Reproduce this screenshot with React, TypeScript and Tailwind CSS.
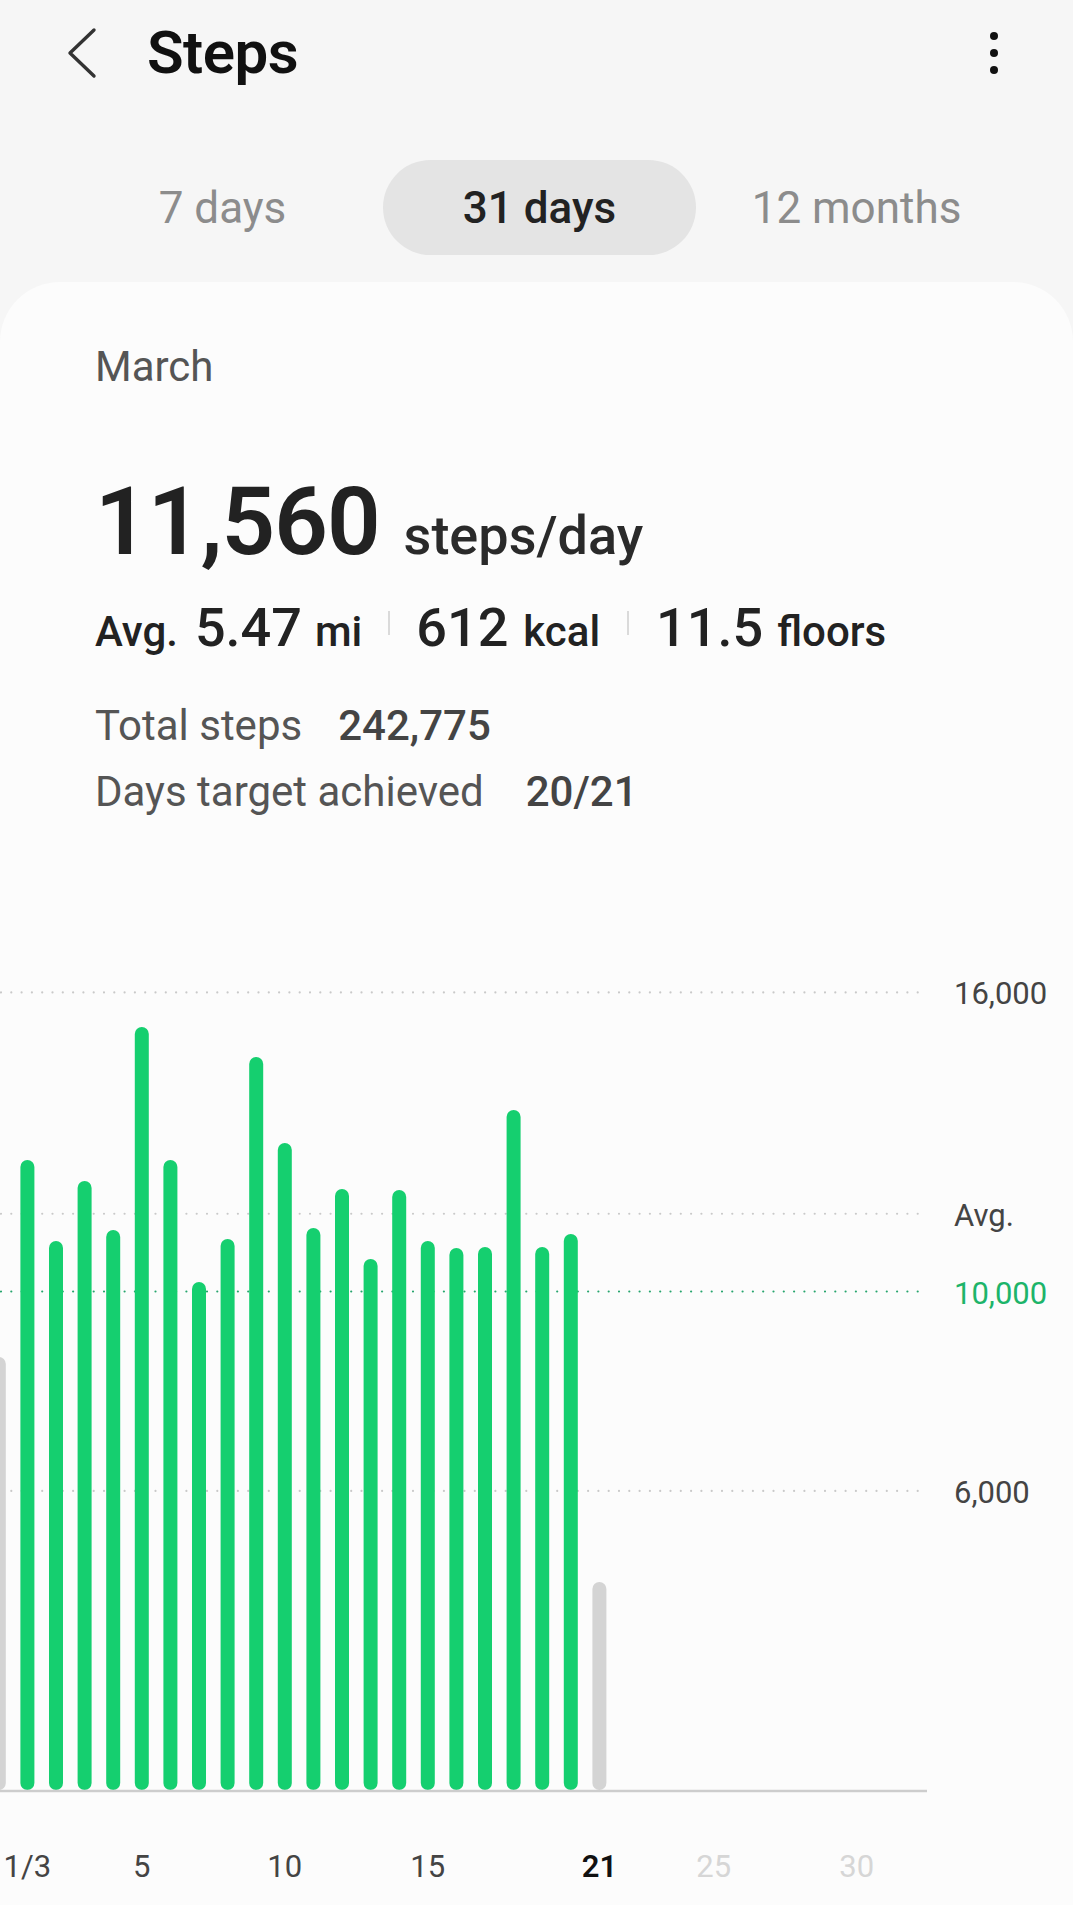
import React from 'react';

// daily step counts, index 0 is the last day of February
const days = [
  8686, 12638, 11013, 12217, 11234, 15306, 12638, 10191, 11053, 14704, 12979,
  11274, 12056, 10652, 12036, 11013, 10873, 10893, 13641, 10893, 11153, 4173,
];

const BASE = 830;
const yFor = (steps: number) => BASE - steps * 0.04985;
const xFor = (day: number) => 27.4 + (day - 1) * 28.6;

function StepsChart() {
  const grid = [
    { y: yFor(16000), label: '16,000', color: '#c9c9c9', text: '#444' },
    { y: yFor(11560), label: 'Avg.', color: '#c9c9c9', text: '#444' },
    { y: yFor(10000), label: '10,000', color: '#26a56d', text: '#1db46a' },
    { y: yFor(6000), label: '6,000', color: '#c9c9c9', text: '#444' },
  ];
  const ticks = [
    { d: 1, label: '1/3', fill: '#444', weight: 400 },
    { d: 5, label: '5', fill: '#444', weight: 400 },
    { d: 10, label: '10', fill: '#444', weight: 400 },
    { d: 15, label: '15', fill: '#444', weight: 400 },
    { d: 21, label: '21', fill: '#111', weight: 600 },
    { d: 25, label: '25', fill: '#d6d6d6', weight: 400 },
    { d: 30, label: '30', fill: '#d6d6d6', weight: 400 },
  ];

  return (
    <svg width="1073" height="945" viewBox="0 0 1073 945" className="block" style={{ fontFamily: 'Roboto, sans-serif' }}>
      {grid.map((g) => (
        <g key={g.label}>
          <line x1="1" y1={g.y} x2="924" y2={g.y} stroke={g.color} strokeWidth="2.2" strokeLinecap="round" strokeDasharray="0 10.3" />
          <text x="954" y={g.y + 12} fontSize="31" fill={g.text}>
            {g.label}
          </text>
        </g>
      ))}

      {days.map((s, d) => {
        const y = yFor(s);
        const gray = d === 0 || d === 21;
        return <rect key={d} x={xFor(d) - 7} y={y} width="14" height={BASE - y} rx="7" fill={gray ? '#d4d4d4' : '#15cf6f'} />;
      })}

      <line x1="0" y1="831" x2="927" y2="831" stroke="#cdcdcd" strokeWidth="2.5" />

      {ticks.map((t) => (
        <text key={t.label} x={xFor(t.d)} y="917" fontSize="31" textAnchor="middle" fill={t.fill} fontWeight={t.weight}>
          {t.label}
        </text>
      ))}
    </svg>
  );
}

export default function App() {
  return (
    <div className="w-[1073px] h-[1905px] bg-[#f6f6f6] overflow-hidden flex flex-col font-['Roboto',sans-serif]">
      {/* top bar */}
      <div className="h-[106px] shrink-0 flex items-center pl-[67px] pr-[75px]">
        <svg width="30" height="52" viewBox="0 0 30 52" fill="none" stroke="#333" strokeWidth="3.4" strokeLinecap="round" strokeLinejoin="round">
          <polyline points="27,3 3,26 27,49" />
        </svg>
        <h1 className="ml-[50px] text-[60px] leading-none font-semibold text-[#111] tracking-[-0.5px]">Steps</h1>
        <div className="ml-auto flex flex-col items-center gap-[9px]">
          <span className="w-[8px] h-[8px] rounded-full bg-[#111]" />
          <span className="w-[8px] h-[8px] rounded-full bg-[#111]" />
          <span className="w-[8px] h-[8px] rounded-full bg-[#111]" />
        </div>
      </div>

      {/* period tabs */}
      <div className="mt-[54px] grid grid-cols-3 pl-[64px] pr-[58px] h-[95px] shrink-0">
        <div className="flex items-center justify-center text-[44px] leading-none text-[#8c8c8c]">7 days</div>
        <div className="mx-[2px] rounded-full bg-[#e4e4e4] flex items-center justify-center text-[44px] leading-none font-medium text-[#222]">
          31 days
        </div>
        <div className="flex items-center justify-center text-[44px] leading-none text-[#8c8c8c]">12 months</div>
      </div>

      {/* summary card */}
      <div className="mt-[27px] flex-1 bg-[#fcfcfc] rounded-t-[60px]">
        <div className="px-[95px] pt-[60px]">
          <div className="text-[42px] leading-[50px] text-[#555]">March</div>

          <div className="mt-[75px] flex items-baseline h-[110px] leading-[110px]">
            <span className="text-[94px] font-semibold text-[#222] tracking-[-1px]">11,560</span>
            <span className="ml-[24px] text-[54px] font-medium text-[#2a2a2a]">steps/day</span>
          </div>

          <div className="mt-[19px] flex items-baseline leading-[64px] text-[#222]">
            <span className="text-[42px] font-medium">Avg.</span>
            <span className="ml-[17px] text-[54px] font-medium">5.47</span>
            <span className="ml-[13px] text-[42px] font-medium">mi</span>
            <span className="mx-[26px] w-[2px] h-[24px] bg-[#dadada] -translate-y-[11px]" />
            <span className="text-[54px] font-medium">612</span>
            <span className="ml-[15px] text-[42px] font-medium">kcal</span>
            <span className="mx-[27px] w-[2px] h-[24px] bg-[#dadada] -translate-y-[11px]" />
            <span className="text-[54px] font-medium">11.5</span>
            <span className="ml-[14px] text-[42px] font-medium">floors</span>
          </div>

          <div className="mt-[29px] text-[42px] leading-[66px]">
            <div className="flex">
              <span className="text-[#555]">Total steps</span>
              <span className="ml-[36px] font-medium text-[#444]">242,775</span>
            </div>
            <div className="flex">
              <span className="text-[#555]">Days target achieved</span>
              <span className="ml-[42px] font-medium text-[#444]">20/21</span>
            </div>
          </div>
        </div>

        <div className="mt-[135px]">
          <StepsChart />
        </div>
      </div>
    </div>
  );
}
